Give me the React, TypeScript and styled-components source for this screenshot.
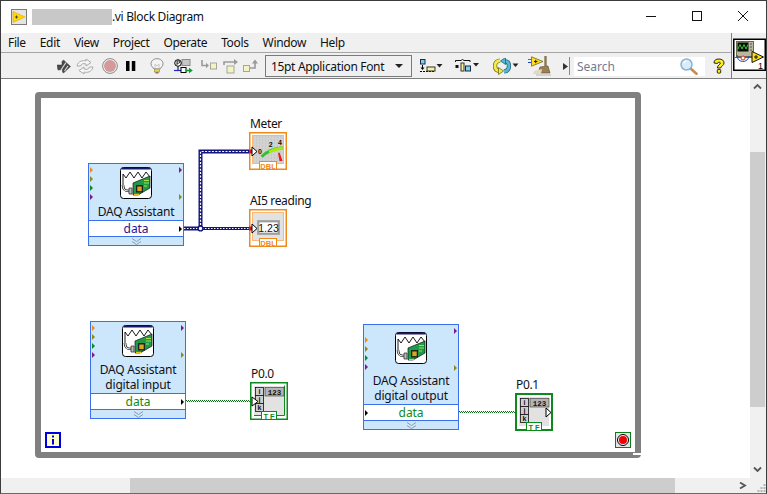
import React from "react";
import styled, { createGlobalStyle } from "styled-components";

const Global = createGlobalStyle`
  html, body { margin: 0; padding: 0; background: #fff; }
  #root { width: 767px; height: 494px; overflow: hidden; }
  * { box-sizing: border-box; }
`;

const FONT = `"Noto Sans", "Open Sans", sans-serif`;

const Win = styled.div`
  width: 767px; height: 494px; display: flex; flex-direction: column;
  border: 1px solid #3c3c3c; border-bottom-color: #6a6a6a; background: #fff;
  font-family: ${FONT}; font-size: 12px; color: #111; overflow: hidden;
`;
const TitleBar = styled.header`
  height: 32px; flex: none; display: flex; align-items: center; padding-left: 10px; background: #fff;
`;
const Redacted = styled.span`
  width: 80px; height: 16px; background: #c8c8c8; margin-left: 5px;
`;
const TitleText = styled.span`
  font-size: 12px; letter-spacing: -0.35px; line-height: 16px;
`;
const WinButtons = styled.div`
  margin-left: auto; display: flex; align-items: center; height: 100%;
`;
const WinBtn = styled.span`
  width: 46px; height: 100%; display: flex; align-items: center; justify-content: center;
  position: relative; top: -1px;
`;
const Header = styled.div`
  display: flex; flex: none; height: 46px; background: #f0f0f0; border-bottom: 1px solid #7f7f7f;
`;
const Bars = styled.div`
  width: 730px; display: flex; flex-direction: column;
`;
const MenuBar = styled.nav`
  height: 20px; display: flex; align-items: center; gap: 14px; padding-left: 7px;
  border-bottom: 1px solid #a6a6a6; font-size: 12px; letter-spacing: -0.35px;
`;
const MenuItem = styled.span`line-height: 18px;`;
const Toolbar = styled.div`
  flex: 1; display: flex; align-items: center; padding-top: 1px;
`;
const Tool = styled.span<{ $gap: number }>`
  margin-left: ${p => p.$gap}px; display: flex; align-items: center; flex: none;
`;
const FontSelect = styled.div`
  margin-left: 6px; width: 147px; height: 22px; display: flex; align-items: center; justify-content: space-between;
  border: 1px solid #7a7a7a; padding: 0 8px 0 5px; background: #f0f0f0; font-size: 12px; letter-spacing: -0.33px; flex: none;
`;
const Caret = styled.span`
  width: 0; height: 0; border-left: 4px solid transparent; border-right: 4px solid transparent; border-top: 4px solid #222;
`;
const Sep = styled.span`
  width: 1px; height: 18px; background: #8a8a8a; margin-left: 1px; flex: none;
`;
const SearchBox = styled.div`
  margin-left: 4px; width: 131px; height: 19px; background: #fff; display: flex; align-items: center;
  justify-content: space-between; padding: 0 7px 0 3px; color: #6f7c93; font-size: 12px; flex: none;
`;
const PaneCell = styled.div`
  flex: 1; border-left: 1px solid #7f7f7f; display: flex; padding: 5px 0 0 1px;
`;
const Body = styled.div`
  flex: 1; min-height: 0; display: flex; flex-direction: column;
`;
const Row = styled.div`
  flex: 1; min-height: 0; display: flex;
`;
const Canvas = styled.main`
  flex: 1; position: relative; overflow: hidden; background: #fff;
`;
const VTrack = styled.div`
  width: 15px; background: #f0f0f0; display: flex; flex-direction: column; align-items: center; margin-right: 0;
`;
const VRow = styled.div`
  width: 16px; background: #f0f0f0; display: flex; justify-content: flex-start;
`;
const ArrowCap = styled.span`
  height: 15px; width: 15px; display: flex; align-items: center; justify-content: center; flex: none;
`;
const VSpace = styled.span<{ $h: number }>`height: ${p => p.$h}px; flex: none;`;
const VThumb = styled.span`
  width: 15px; height: 255px; background: #cdcdcd; flex: none;
`;
const HBar = styled.div`
  height: 15px; flex: none; display: flex; background: #f0f0f0;
`;
const HThumb = styled.span`
  margin-left: 129px; width: 545px; background: #cdcdcd;
`;
const HCap = styled.span`
  margin-left: auto; width: 15px; display: flex; align-items: center; justify-content: center;
`;
const Grip = styled.span`
  width: 16px; display: flex; align-items: flex-end; justify-content: flex-end;
`;

const Loop = styled.div`
  position: absolute; left: 34px; top: 13px; width: 606px; height: 366px; border: 6px solid #808080;
  border-radius: 4px;
`;
const LoopNotch = styled.span`
  position: absolute; right: -6px; bottom: -3px; width: 8px; height: 2px; background: #fff;
`;
const Wires = styled.svg`
  position: absolute; left: 0; top: 0;
`;
const NodeBox = styled.div<{ $x: number; $y: number }>`
  position: absolute; left: ${p => p.$x}px; top: ${p => p.$y}px; width: 96px;
  background: #cce6fb; border: 1px solid #3a70ee; display: flex; flex-direction: column; align-items: center;
`;
const NodeIcon = styled.span<{ $pad: number }>`
  display: block; height: 32px; margin-top: ${p => p.$pad}px; flex: none;
`;
const NodeName = styled.div<{ $gap: number }>`
  margin-top: ${p => p.$gap}px; margin-bottom: 1px; text-align: center; line-height: 15px; font-size: 12px; letter-spacing: -0.2px; color: #10101a;
`;
const DataRow = styled.div<{ $color: string }>`
  align-self: stretch; height: 17px; background: #fff; border-top: 1px solid #3a70ee; border-bottom: 1px solid #3a70ee;
  text-align: center; line-height: 16px; font-size: 12px; color: ${p => p.$color}; letter-spacing: -0.1px;
`;
const NodeFoot = styled.div`
  height: 8px; display: flex; align-items: center; justify-content: center; align-self: stretch;
`;
const Port = styled.span<{ $side: "l" | "r"; $top: number; $color: string }>`
  position: absolute; ${p => (p.$side === "l" ? "left: 1px" : "right: 1px")}; top: ${p => p.$top}px; width: 0; height: 0;
  border-top: 3px solid transparent; border-bottom: 3px solid transparent; border-left: 3px solid ${p => p.$color};
`;
const TermWrap = styled.div<{ $x: number; $y: number }>`
  position: absolute; left: ${p => p.$x}px; top: ${p => p.$y}px; display: flex; flex-direction: column; align-items: flex-start;
`;
const TermLabel = styled.span`
  font-size: 12px; line-height: 16px; letter-spacing: -0.35px; color: #111; margin-left: 1px; white-space: nowrap;
`;
const CanvasBadge = styled.span<{ $x: number; $y: number }>`
  position: absolute; left: ${p => p.$x}px; top: ${p => p.$y}px; display: block; width: 16px; height: 16px;
`;

/* ---------- drawings ---------- */
const LvIcon = () => (
  <svg width="16" height="16" viewBox="0 0 16 16">
    <rect x=".5" y=".5" width="15" height="15" fill="#e4e4e4" stroke="#7a7a7a" />
    <path d="M2 2.5 L14 8 L2 13.5Z" fill="#ffd800" stroke="#e0a800" strokeWidth=".6" />
    <path d="M4 8h3M5.5 6.5v3" stroke="#444" strokeWidth="1" />
  </svg>
);
const RunIcon = () => (
  <svg width="14" height="15" viewBox="0 0 14 15">
    <path d="M0 6 L5 6 L5 2.5 L6.5 1 L13.5 7.5 L6.5 14 L5.5 13 L5.5 10.5 L1 11Z" fill="#4a4a4a" stroke="#333" strokeWidth=".5" />
    <path d="M4 11 L9 3.5 M7.5 12 L11 7" stroke="#ddd" strokeWidth="1.2" />
  </svg>
);
const RunContIcon = () => (
  <svg width="18" height="17" viewBox="0 0 18 17" fill="#f6f6f6" stroke="#aaa" strokeWidth="1">
    <path d="M1 8 C2 3 7 2 10 3 L10 1 L15 4.5 L10 8 L10 6 C7 5 5 6 4.5 8Z" />
    <path d="M17 9 C16 14 11 15 8 14 L8 16 L3 12.5 L8 9 L8 11 C11 12 13 11 13.5 9Z" />
  </svg>
);
const AbortIcon = () => (
  <svg width="16" height="16" viewBox="0 0 16 16">
    <circle cx="8" cy="8" r="7.4" fill="#f2f2f2" stroke="#8a8a8a" />
    <circle cx="8" cy="8" r="6" fill="#d49a9a" />
  </svg>
);
const PauseIcon = () => (
  <svg width="10" height="10" viewBox="0 0 10 10">
    <rect x="0" y="0" width="3.5" height="10" fill="#000" />
    <rect x="5.8" y="0" width="3.5" height="10" fill="#000" />
  </svg>
);
const BulbIcon = () => (
  <svg width="14" height="16" viewBox="0 0 14 16">
    <path d="M7 .7 C3 .7 1 3.3 1 5.8 C1 8 3 9.5 4 11 L10 11 C11 9.5 13 8 13 5.8 C13 3.3 11 .7 7 .7Z" fill="#f4f4f4" stroke="#8c8c8c" />
    <path d="M5 10 L5 6 M9 10 L9 6 M5 6 L7 8 L9 6" fill="none" stroke="#b5b5b5" strokeWidth=".7" />
    <rect x="4.5" y="11" width="5" height="3" fill="#ecd24a" stroke="#8c8a50" strokeWidth=".6" />
    <rect x="5.5" y="14" width="3" height="1.5" fill="#7d7d5a" />
  </svg>
);
const RetainIcon = () => (
  <svg width="19" height="15" viewBox="0 0 19 15">
    <rect x="8" y=".5" width="8" height="6" fill="#c6c6c6" stroke="#8a8a8a" />
    <circle cx="4" cy="4" r="3.3" fill="#fff" stroke="#000" />
    <path d="M3 6V2h1.6a1 1 0 0 1 0 2.2H3" fill="none" stroke="#000" strokeWidth=".8" />
    <path d="M4 7.5v4" stroke="#000" />
    <path d="M0 11.5h14" stroke="#1a2ad0" strokeWidth="1.2" />
    <rect x="7" y="8.5" width="5" height="5" fill="#fff" stroke="#000" />
    <path d="M12 11.5h4" stroke="#08a030" strokeWidth="1.5" />
    <path d="M15 8.8 L18.8 11.5 L15 14.2Z" fill="#08a030" />
  </svg>
);
const StepInto = () => (
  <svg width="16" height="12" viewBox="0 0 16 12">
    <path d="M1 0v5.5h5" fill="none" stroke="#9a9a9a" strokeWidth="1.6" />
    <path d="M5 2.8 L8 5.5 L5 8.2Z" fill="#9a9a9a" />
    <rect x="9.5" y="3" width="6" height="6" fill="#f4f3c4" stroke="#a5a59c" />
  </svg>
);
const StepOver = () => (
  <svg width="15" height="15" viewBox="0 0 15 15">
    <path d="M1 6V3h10" fill="none" stroke="#9a9a9a" strokeWidth="1.6" />
    <path d="M11 0 L15 3 L11 6Z" fill="#9a9a9a" />
    <rect x="4" y="7" width="7" height="7" fill="#f4f3c4" stroke="#a5a59c" />
  </svg>
);
const StepOut = () => (
  <svg width="16" height="14" viewBox="0 0 16 14">
    <rect x=".5" y="6.5" width="6" height="6" fill="#f4f3c4" stroke="#a5a59c" />
    <path d="M7 9h5V4" fill="none" stroke="#9a9a9a" strokeWidth="1.6" />
    <path d="M9 4.5 L12 .5 L15 4.5Z" fill="#9a9a9a" />
  </svg>
);
const Tri = ({ x, y }: { x: number; y: number }) => <path d={`M${x} ${y}h6l-3 3.5z`} fill="#222" />;
const AlignIcon = () => (
  <svg width="23" height="15" viewBox="0 0 23 15">
    <rect x=".5" y=".5" width="4.5" height="4.5" fill="#7fd0f0" stroke="#1a2a44" />
    <path d="M2.5 6v3" stroke="#000" />
    <path d="M.5 8.5h4L2.5 11z" fill="#000" />
    <path d="M0 12.5h14" stroke="#000" strokeDasharray="2 1" />
    <rect x="7" y="8" width="8" height="4" fill="#f6f29a" stroke="#333" />
    <Tri x={16.5} y={5} />
  </svg>
);
const DistIcon = () => (
  <svg width="25" height="14" viewBox="0 0 25 14">
    <path d="M.5 3V1.5H6L7.5 .5L9 1.5H15V3" fill="none" stroke="#111" />
    <rect x=".5" y="6" width="3" height="3" fill="#111" />
    <rect x="6" y="4" width="3" height="8" fill="#f6f29a" stroke="#333" />
    <rect x="10.5" y="7" width="5" height="5" fill="#7fd0f0" stroke="#1a2a44" />
    <Tri x={18} y={4} />
  </svg>
);
const ReorderIcon = () => (
  <svg width="26" height="17" viewBox="0 0 26 17">
    <path d="M7 2.5 C3.5 3 2 5.5 2 8 C2 10.5 3.5 12.5 6 13" fill="none" stroke="#6e6c18" strokeWidth="4.2" />
    <path d="M7 2.5 C3.5 3 2 5.5 2 8 C2 10.5 3.5 12.5 6 13" fill="none" stroke="#f4ea48" strokeWidth="2.8" />
    <path d="M5.5 9.5 L10.5 13 L5.5 16.5Z" fill="#f4ea48" stroke="#6e6c18" strokeWidth=".8" />
    <path d="M11 13.5 C14.5 13 16 10.5 16 8 C16 5.5 14.5 3.5 12 3" fill="none" stroke="#1c6480" strokeWidth="4.2" />
    <path d="M11 13.5 C14.5 13 16 10.5 16 8 C16 5.5 14.5 3.5 12 3" fill="none" stroke="#58b8d0" strokeWidth="2.8" />
    <path d="M12.5 -.5 L7.5 3 L12.5 6.5Z" fill="#58b8d0" stroke="#1c6480" strokeWidth=".8" />
    <Tri x={19.5} y={5.5} />
  </svg>
);
const CleanupIcon = () => (
  <svg width="23" height="20" viewBox="0 0 23 20">
    <path d="M0 3.5h4" stroke="#d44040" />
    <path d="M0 6.5h4" stroke="#2040c0" />
    <path d="M3.5 .8 L15 5.5 L3.5 10.2Z" fill="#ffdd20" stroke="#6a6a20" strokeWidth=".8" />
    <path d="M6 5.5h3.5M7.7 3.8v3.4" stroke="#222" strokeWidth="1" />
    <path d="M16.3 0h2.4v10h-2.4z" fill="#8a7650" />
    <path d="M12 11 L20 10 L22 17 L10 17Z" fill="#9a8052" stroke="#5a4a30" strokeWidth=".6" />
    <path d="M6 15 L14 13 L13 18 L5 18Z" fill="#e4d9bd" />
    <path d="M8 19h15" stroke="#b6b6b6" />
  </svg>
);
const SmallArrow = () => (
  <svg width="5" height="7" viewBox="0 0 5 7"><path d="M0 0 L5 3.5 L0 7Z" fill="#333" /></svg>
);
const Magnifier = () => (
  <svg width="18" height="17" viewBox="0 0 18 17">
    <path d="M10.5 10.5 L16.5 15.8" stroke="#c98a4e" strokeWidth="2.6" strokeLinecap="round" />
    <circle cx="6.5" cy="6.5" r="5.5" fill="#d8ecfa" stroke="#8cb2d2" strokeWidth="1.5" />
    <path d="M3.5 5 a3.5 3.5 0 0 1 3-2" stroke="#fff" strokeWidth="1.3" fill="none" />
  </svg>
);
const HelpIcon = () => (
  <svg width="12" height="17" viewBox="0 0 12 17">
    <path d="M1 5 C1 2 3 1 6 1 C9 1 11 2.5 11 5 C11 7.5 8.2 7.8 7.6 10 L4.4 10 C4.4 7 7.4 6.5 7.4 5 C7.4 4 4.5 3.8 4.4 5.5Z" fill="#ffec20" stroke="#111" strokeWidth=".9" />
    <rect x="4.3" y="11.5" width="3.4" height="3.6" rx=".8" fill="#ffec20" stroke="#111" strokeWidth=".9" />
  </svg>
);
const ConnectorPane = () => (
  <svg width="33" height="33" viewBox="0 0 33 33">
    <rect x=".75" y="1.25" width="31.5" height="31" fill="#fff" stroke="#000" strokeWidth="1.5" />
    <rect x="3.5" y="3.5" width="17" height="15" fill="#b9b79c" stroke="#6a6a50" />
    <rect x="4.5" y="4.5" width="11" height="9" fill="#0a0a0a" />
    <path d="M5 11 L7 6.5 L9 11 L11 6.5 L13 11 L15 6.5" fill="none" stroke="#30d030" />
    <path d="M17 6h2M17 9h2M17 12h2" stroke="#555" />
    <path d="M2 19.5h17" stroke="#e03020" />
    <path d="M4 17 a6 6 0 0 0 12 1" fill="none" stroke="#2040c0" />
    <circle cx="10" cy="20" r="2" fill="#fff" stroke="#d03020" />
    <path d="M19 13.5 L30.5 19 L19 24.5Z" fill="#ffdd20" stroke="#111" />
    <path d="M21 19h4M23 17v4" stroke="#111" />
    <text x="25" y="31" fontFamily="Liberation Sans" fontSize="9" fill="#000">1</text>
  </svg>
);
const WinMin = () => <svg width="10" height="10" viewBox="0 0 10 10"><path d="M0 5.5h10" stroke="#111" /></svg>;
const WinMax = () => <svg width="10" height="10" viewBox="0 0 10 10"><rect x=".5" y=".5" width="9" height="9" fill="none" stroke="#111" /></svg>;
const WinClose = () => <svg width="10" height="10" viewBox="0 0 10 10"><path d="M0 0L10 10M10 0L0 10" stroke="#111" /></svg>;
const Chev = ({ d }: { d: string }) => (
  <svg width="9" height="7" viewBox="0 0 9 7"><path d={d} fill="none" stroke="#555" strokeWidth="1.8" /></svg>
);
const DaqIcon = () => (
  <svg width="32" height="32" viewBox="0 0 32 32">
    <rect x=".5" y=".5" width="31" height="31" rx="3" fill="#fff" stroke="#000" />
    <path d="M2 1.5h28" stroke="#1a1a6a" strokeWidth="2" />
    <path d="M3 18V7 L6 11 L10 5 L14 11 L18 5 L22 11 L26 5 L30 10" fill="none" stroke="#000" strokeWidth=".9" />
    <path d="M3 18 C3 23 5 24 9 24" fill="none" stroke="#111" strokeWidth="2.6" />
    <path d="M3 18 C3 23 5 24 9 24" fill="none" stroke="#fff" strokeWidth="1.1" />
    <path d="M9 21h3v6h-3z" fill="#bcbcbc" stroke="#222" strokeWidth=".7" />
    <path d="M13 16 L30 9 L30 21 L18 28 L13 28Z" fill="#1e9a48" stroke="#111" strokeWidth=".7" />
    <path d="M16 18h7v7.5h-7z" fill="#222" />
    <path d="M17.3 19.5h4.4v4.6h-4.4z" fill="#d8a818" />
    <path d="M24 13.5h5M24 16h5M24 19h3" stroke="#a8e050" strokeWidth="1" />
    <path d="M14 27.5h5" stroke="#e8c020" strokeWidth="1" />
  </svg>
);
const Term = ({ children, color, tag, thick }: { children: React.ReactNode; color: string; tag: string; thick?: boolean }) => (
  <svg width="38" height="38" viewBox="0 0 38 38">
    <rect x="0.75" y="0.75" width="36.5" height="36.5" fill="#fff" stroke={color} strokeWidth={thick ? 2.5 : 1.5} />
    {children}
    <rect x={tag === "DBL" ? 10.5 : 11.5} y="29.5" width={tag === "DBL" ? 17 : 15} height="8" fill="#fff" stroke={color} />
    <text x={tag === "DBL" ? 19 : 20} y="36.5" textAnchor="middle" fontFamily="Liberation Sans" fontWeight="700" fontSize="7.5" letterSpacing={tag === "DBL" ? 0.1 : 2} fill={color}>{tag}</text>
  </svg>
);
const InArrow = ({ y, red }: { y: number; red?: boolean }) => (
  <>
    {red && <rect x="0" y={y - 2} width="3.5" height="4" fill="#f01010" />}
    <path d={`M3 ${y - 4.5} L8 ${y} L3 ${y + 4.5}Z`} fill="#fff" stroke="#000" />
  </>
);
const MeterTerm = () => (
  <Term color="#ee8a1c" tag="DBL">
    <rect x="3.5" y="3.5" width="31" height="28" fill="#d2d2d2" stroke="#f6b874" />
    <path d="M4 5h30M4 8h30M4 11h30M4 14h30M4 17h30M4 20h30M4 23h30M4 26h30M4 29h30" fill="none" stroke="#bdbdbd" strokeDasharray="1 2" />
    <path d="M12.7 24.7 Q20 17 33.7 15.7" fill="none" stroke="#30c030" strokeWidth="3" />
    <path d="M20 20 Q26 17 33.7 15.7" fill="none" stroke="#a8e810" strokeWidth="3" />
    <path d="M29 21 L30.5 20.5 L33.5 29 L30.5 29Z" fill="#f01818" />
    <text x="11" y="21.5" textAnchor="middle" fontFamily="Liberation Sans" fontWeight="700" fontSize="7" fill="#111">0</text>
    <text x="21.7" y="14.5" textAnchor="middle" fontFamily="Liberation Sans" fontWeight="700" fontSize="7" fill="#111">2</text>
    <text x="31" y="12.5" textAnchor="middle" fontFamily="Liberation Sans" fontWeight="700" fontSize="7" fill="#111">4</text>
    <InArrow y={19.5} red />
  </Term>
);
const NumTerm = () => (
  <Term color="#ee8a1c" tag="DBL">
    <rect x="3.5" y="3.5" width="31" height="28" fill="#e2e2e2" stroke="#f6b874" />
    <rect x="8" y="11" width="23" height="15" fill="#a8a8a8" />
    <rect x="10" y="13" width="19" height="11" fill="#fff" stroke="#777" strokeWidth=".5" />
    <text x="19.5" y="22.6" textAnchor="middle" fontFamily="Liberation Sans" fontSize="10.5" fill="#111">1.23</text>
    <InArrow y={19.5} red />
  </Term>
);
const IjkBlocks = () => (
  <>
    {["i", "j", "k"].map((c, n) => (
      <g key={c}>
        <rect x="5.5" y={5.5 + n * 8} width="8" height="8" fill="#cfcfcf" stroke="#111" strokeWidth=".8" />
        <text x="9.5" y={12 + n * 8} textAnchor="middle" fontFamily="Liberation Sans" fontWeight="700" fontSize="7" fill="#111">{c}</text>
      </g>
    ))}
    <rect x="15" y="5.5" width="19" height="8.5" fill="#b4b4b4" stroke="#333" strokeWidth=".6" />
    <text x="24.5" y="12.5" textAnchor="middle" fontFamily="Liberation Mono" fontWeight="700" fontSize="7.5" fill="#111">123</text>
  </>
);
const BoolTermIn = () => (
  <Term color="#0d8a1c" tag="TF">
    <rect x="4" y="4" width="30" height="29" fill="#e2e2e2" />
    <path d="M34.5 3.5V33.5H4" fill="none" stroke="#0d8a1c" />
    <IjkBlocks />
    <path d="M2 15 L8 19.5 L2 24Z" fill="#fff" stroke="#000" />
  </Term>
);
const BoolTermOut = () => (
  <Term color="#0d8a1c" tag="TF" thick>
    <rect x="4" y="4" width="30" height="29" fill="#e2e2e2" />
    <IjkBlocks />
    <path d="M31 15 L36 19.5 L31 24Z" fill="#fff" stroke="#000" />
  </Term>
);
const IterBadge = () => (
  <svg width="16" height="16" viewBox="0 0 16 16">
    <rect x="1" y="1" width="14" height="14" fill="#ffffc8" stroke="#0000e0" strokeWidth="2" />
    <path d="M8 3.5v2M8 7v5.5" stroke="#0000e0" strokeWidth="2" />
  </svg>
);
const StopBadge = () => (
  <svg width="16" height="16" viewBox="0 0 16 16">
    <rect x=".5" y=".5" width="15" height="15" fill="#e4e4e4" stroke="#0d7a1c" />
    <circle cx="8" cy="8" r="5.5" fill="#f2f2f2" stroke="#000" />
    <circle cx="8" cy="8" r="4" fill="#f00000" />
  </svg>
);

type PortDef = { side: "l" | "r"; top: number; color: string };
const O = "#f08a10", K = "#8a8a14", G = "#0a8a20", P = "#7a1a8c";
const stdPorts = (o: number): PortDef[] => [
  { side: "l", top: o, color: O }, { side: "l", top: o + 9, color: K },
  { side: "l", top: o + 18, color: G }, { side: "l", top: o + 27, color: P },
];

const DaqNode = ({ x, y, pad, gap, lines, color, ports, dataSide, dataTop }: {
  x: number; y: number; pad: number; gap: number; lines: string[]; color: string; ports: PortDef[]; dataSide: "l" | "r"; dataTop: number;
}) => (
  <NodeBox $x={x} $y={y}>
    <NodeIcon $pad={pad}><DaqIcon /></NodeIcon>
    <NodeName $gap={gap}>{lines.map((l, i) => <React.Fragment key={l}>{i > 0 && <br />}{l}</React.Fragment>)}</NodeName>
    <DataRow $color={color}>data</DataRow>
    <NodeFoot>
      <svg width="11" height="7" viewBox="0 0 11 7"><path d="M1 .5l4.5 3 4.5-3M1 3.5l4.5 3 4.5-3" fill="none" stroke="#8b9cb2" /></svg>
    </NodeFoot>
    {ports.map(p => <Port key={p.side + p.top} $side={p.side} $top={p.top} $color={p.color} />)}
    <Port $side={dataSide} $top={dataTop} $color="#000" />
  </NodeBox>
);

const BoolWire = ({ x1, x2, y }: { x1: number; x2: number; y: number }) => (
  <>
    <path d={`M${x1} ${y - 0.5}H${x2}`} stroke="#0c6a14" strokeDasharray="1 1" />
    <path d={`M${x1 + 1} ${y + 0.5}H${x2}`} stroke="#0c6a14" strokeDasharray="1 1" />
  </>
);

const RunTools = () => (
  <>
    <Tool $gap={56}><RunIcon /></Tool>
    <Tool $gap={5}><RunContIcon /></Tool>
    <Tool $gap={8}><AbortIcon /></Tool>
    <Tool $gap={8}><PauseIcon /></Tool>
    <Tool $gap={14}><BulbIcon /></Tool>
    <Tool $gap={10}><RetainIcon /></Tool>
    <Tool $gap={8}><StepInto /></Tool>
    <Tool $gap={6}><StepOver /></Tool>
    <Tool $gap={5}><StepOut /></Tool>
  </>
);

export default function App() {
  return (
    <>
      <Global />
      <Win>
        <TitleBar>
          <LvIcon />
          <Redacted />
          <TitleText>.vi Block Diagram</TitleText>
          <WinButtons>
            <WinBtn><WinMin /></WinBtn>
            <WinBtn><WinMax /></WinBtn>
            <WinBtn><WinClose /></WinBtn>
          </WinButtons>
        </TitleBar>
        <Header>
          <Bars>
            <MenuBar>
              {["File", "Edit", "View", "Project", "Operate", "Tools", "Window", "Help"].map(m => <MenuItem key={m}>{m}</MenuItem>)}
            </MenuBar>
            <Toolbar>
              <RunTools />
              <FontSelect>15pt Application Font<Caret /></FontSelect>
              <Tool $gap={8}><AlignIcon /></Tool>
              <Tool $gap={12}><DistIcon /></Tool>
              <Tool $gap={13}><ReorderIcon /></Tool>
              <Tool $gap={9}><CleanupIcon /></Tool>
              <Tool $gap={12}><SmallArrow /></Tool>
              <Sep />
              <SearchBox>Search<Magnifier /></SearchBox>
              <Tool $gap={8}><HelpIcon /></Tool>
            </Toolbar>
          </Bars>
          <PaneCell><ConnectorPane /></PaneCell>
        </Header>
        <Body>
          <Row>
            <Canvas>
              <Loop><LoopNotch /></Loop>
              <Wires width="749" height="398" viewBox="0 0 749 398">
                <path d="M183 149.5H199.5V72.5H250" fill="none" stroke="#14147a" strokeWidth="4" />
                <path d="M199.5 149.5V72.5H250" fill="none" stroke="#fff" strokeWidth="1.2" strokeDasharray="2 1.4" />
                <path d="M183 149.5H250" fill="none" stroke="#14147a" strokeWidth="3" />
                <path d="M183 149.5H250" fill="none" stroke="#fff" strokeWidth="1" strokeDasharray="1.5 1.5" />
                <circle cx="199.5" cy="149.5" r="2.4" fill="#fff" stroke="#14147a" strokeWidth="1.4" />
                <BoolWire x1={185} x2={249} y={322} />
                <BoolWire x1={458} x2={514} y={333} />
              </Wires>
              <DaqNode x={87} y={84} pad={3} gap={5} lines={["DAQ Assistant"]} color="#2a1490" ports={[...stdPorts(3), { side: "r", top: 3, color: P }, { side: "r", top: 30, color: K }]} dataSide="r" dataTop={62} />
              <DaqNode x={89} y={242} pad={3} gap={5} lines={["DAQ Assistant", "digital input"]} color="#0c8a1c" ports={[...stdPorts(3), { side: "r", top: 3, color: P }, { side: "r", top: 30, color: K }]} dataSide="r" dataTop={77} />
              <DaqNode x={362} y={245} pad={7} gap={9} lines={["DAQ Assistant", "digital output"]} color="#0c8a1c" ports={[...stdPorts(12), { side: "r", top: 3, color: P }, { side: "r", top: 40, color: K }]} dataSide="l" dataTop={85} />
              <TermWrap $x={248} $y={37}><TermLabel>Meter</TermLabel><MeterTerm /></TermWrap>
              <TermWrap $x={248} $y={114}><TermLabel>AI5 reading</TermLabel><NumTerm /></TermWrap>
              <TermWrap $x={249} $y={287}><TermLabel>P0.0</TermLabel><BoolTermIn /></TermWrap>
              <TermWrap $x={514} $y={298}><TermLabel>P0.1</TermLabel><BoolTermOut /></TermWrap>
              <CanvasBadge $x={44} $y={353}><IterBadge /></CanvasBadge>
              <CanvasBadge $x={614} $y={353}><StopBadge /></CanvasBadge>
            </Canvas>
            <VRow>
              <VTrack>
                <ArrowCap><Chev d="M1 5.5L4.5 2L8 5.5" /></ArrowCap>
                <VSpace $h={58} />
                <VThumb />
                <VSpace $h={55} />
                <ArrowCap><Chev d="M1 1.5L4.5 5L8 1.5" /></ArrowCap>
              </VTrack>
            </VRow>
          </Row>
          <HBar>
            <HThumb />
            <HCap><Chev d="M2 .5L7 3.5L2 6.5" /></HCap>
            <Grip>
              <svg width="9" height="9" viewBox="0 0 9 9">
                <path d="M6.5 0h2v2h-2zM3.5 3h2v2h-2zM6.5 3h2v2h-2zM.5 6h2v2h-2zM3.5 6h2v2h-2zM6.5 6h2v2h-2z" fill="#b4b4b4" />
              </svg>
            </Grip>
          </HBar>
        </Body>
      </Win>
    </>
  );
}
